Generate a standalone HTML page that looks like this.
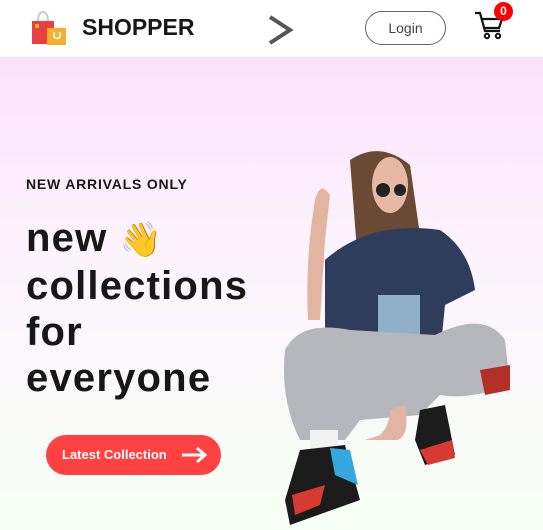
<!DOCTYPE html>
<html><head><style>
*{margin:0;padding:0;box-sizing:border-box}
body{width:543px;height:530px;overflow:hidden;font-family:"Liberation Sans",sans-serif;background:#fff;position:relative}
.hdr{position:absolute;left:0;top:0;width:543px;height:57px;background:#fff}
.hero{position:absolute;left:0;top:57px;width:543px;height:473px;background:linear-gradient(180deg,#fbe1fb 0%,#fdf3fd 40%,#f6fff5 100%)}
.t{position:absolute;color:#171717;font-weight:bold}
</style></head><body>
<div class="hdr">
<svg style="position:absolute;left:30px;top:10px" width="40" height="36" viewBox="0 0 40 36">
<path d="M8 12 Q8 2 13 2 Q18 2 18 12" fill="none" stroke="#ccc" stroke-width="2"/>
<rect x="2" y="11" width="22" height="23" fill="#e84040"/>
<rect x="5" y="14" width="4" height="4" fill="#f5b82e"/>
<rect x="17" y="18" width="19" height="17" fill="#f5b02e"/>
<path d="M24 22 v5 q3 3 6 0 v-5" fill="none" stroke="#fff" stroke-width="1.5"/>
</svg>
<div class="t" style="left:82px;top:14px;font-size:23px">SHOPPER</div>
<svg style="position:absolute;left:266px;top:14px" width="28" height="32"><path d="M4 3 L24 16 L4 29" fill="none" stroke="#555" stroke-width="4"/></svg>
<div style="position:absolute;left:365px;top:11px;width:81px;height:34px;border:1px solid #666;border-radius:17px;text-align:center;line-height:32px;font-size:14px;color:#444">Login</div>
<svg style="position:absolute;left:473px;top:10px" width="32" height="30" viewBox="0 0 32 30"><path d="M2 3 H7 L12 21 H27 M9 9 H29 L26 18 H11" fill="none" stroke="#111" stroke-width="2.2"/><circle cx="14" cy="26" r="2.2" fill="none" stroke="#111" stroke-width="2"/><circle cx="25" cy="26" r="2.2" fill="none" stroke="#111" stroke-width="2"/></svg>
<div style="position:absolute;left:494px;top:2px;width:19px;height:19px;border-radius:50%;background:#f00;color:#fff;font-size:12px;font-weight:bold;text-align:center;line-height:19px">0</div>
</div>
<div class="hero"></div>
<div class="t" style="left:26px;top:176px;font-size:14px;letter-spacing:0.8px">NEW ARRIVALS ONLY</div>
<div class="t" style="left:26px;top:215px;font-size:40px;line-height:46px;letter-spacing:1.2px">new <span style="font-size:34px">👋</span><br>collections<br>for<br>everyone</div>
<div style="position:absolute;left:46px;top:435px;width:175px;height:40px;border-radius:20px;background:#ff4141;color:#fff;font-size:13px;font-weight:bold;line-height:40px;padding-left:16px">Latest Collection
<svg style="position:absolute;left:134px;top:11px" width="28" height="18"><path d="M2 9 H24 M17 2 L25 9 L17 16" fill="none" stroke="#fff" stroke-width="3"/></svg></div>
<svg style="position:absolute;left:270px;top:140px" width="273" height="390" viewBox="0 0 273 390">
<path d="M80 20 Q110 0 140 25 L155 130 L90 150 Z" fill="#6b4a35"/>
<ellipse cx="120" cy="45" rx="18" ry="28" fill="#e7b9a5"/>
<circle cx="113" cy="50" r="7" fill="#222"/><circle cx="130" cy="50" r="6" fill="#222"/>
<path d="M55 120 Q100 80 170 90 Q200 110 205 150 L175 165 L170 215 L80 220 L75 190 L55 190 Z" fill="#2f3d5c"/>
<rect x="108" y="155" width="42" height="40" fill="#8fb0c8"/>
<path d="M45 60 Q50 40 60 55 L55 100 L50 180 L38 180 Q35 120 45 60Z" fill="#e2b4a2"/>
<path d="M15 210 Q30 180 80 190 L165 195 Q215 170 235 200 L240 245 Q200 260 170 255 L150 275 L90 280 L75 300 L30 300 Q10 260 15 210Z" fill="#b5b7bc"/>
<path d="M95 300 L110 295 Q120 285 120 270 L135 265 Q140 295 128 300Z" fill="#e2b4a2"/>
<path d="M210 230 L240 225 L240 250 L215 255Z" fill="#b3302a"/>
<rect x="40" y="290" width="28" height="25" fill="#f2f2f2"/>
<path d="M30 310 L75 305 L90 360 L20 385 L15 360Z" fill="#1b1b1b"/>
<path d="M60 308 L80 310 L88 345 L65 335Z" fill="#36a8e0"/>
<path d="M22 355 L55 345 L50 365 L25 375Z" fill="#d63a30"/>
<path d="M150 270 L175 265 L185 315 L155 325 L145 300Z" fill="#1b1b1b"/>
<path d="M150 310 L182 300 L185 318 L158 325Z" fill="#d63a30"/>
</svg>
</body></html>
